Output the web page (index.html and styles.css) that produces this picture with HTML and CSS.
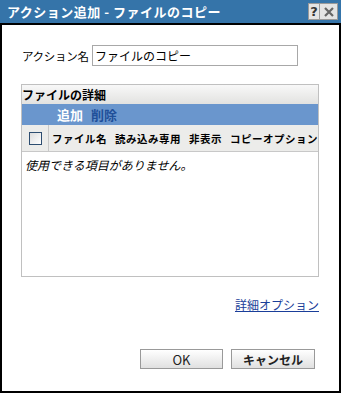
FILE: index.html
```html
<!DOCTYPE html>
<html lang="ja">
<head>
<meta charset="utf-8">
<link rel="stylesheet" href="styles.css">
</head>
<body>
<div class="dialog">
  <div class="titlebar">
    <span class="title">アクション追加 - ファイルのコピー</span>
    <div class="tbtns">
      <span class="tbtn">?</span>
      <span class="tbtn x">
        <svg width="12" height="12" viewBox="0 0 12 12"><path d="M2 2L10 10M10 2L2 10" stroke="#666" stroke-width="2.2"/></svg>
      </span>
    </div>
  </div>
  <div class="content">
    <div class="namerow">
      <label class="lbl">アクション名</label>
      <div class="input">ファイルのコピー</div>
    </div>
    <div class="panel">
      <div class="phead">ファイルの詳細</div>
      <div class="toolbar"><span class="add">追加</span><span class="del">削除</span></div>
      <div class="thead">
        <div class="chkcell"><span class="chk"></span></div>
        <div class="cols">
          <span>ファイル名</span>
          <span>読み込み専用</span>
          <span>非表示</span>
          <span>コピーオプション</span>
        </div>
      </div>
      <div class="empty">使用できる項目がありません。</div>
    </div>
    <div class="linkrow"><a class="link">詳細オプション</a></div>
    <div class="btnrow">
      <button class="btn">OK</button>
      <button class="btn">キャンセル</button>
    </div>
  </div>
</div>
</body>
</html>
```
FILE: styles.css
```css
html, body { margin: 0; padding: 0; background: #fff; }
body { font-family: "Noto Sans CJK JP", "DejaVu Sans", sans-serif; font-size: 12px; color: #000; }
.dialog {
  width: 341px; height: 393px; box-sizing: border-box;
  border: 2px solid #000; border-top: none;
  display: flex; flex-direction: column;
}
.titlebar {
  height: 23px; background: #3574a9; border-bottom: 2px solid #000;
  margin: 0 -2px; padding: 0 3px 0 7px;
  display: flex; align-items: center; justify-content: space-between;
}
.title { color: #fff; font-weight: bold; font-size: 13px; letter-spacing: 0.5px; }
.tbtns { display: flex; gap: 0; }
.tbtn {
  width: 10px; height: 15px; background: #e4e4e4; border: 1px solid #9a9a9a;
  display: flex; align-items: center; justify-content: center;
  font-family: "DejaVu Sans", sans-serif; font-weight: bold; font-size: 13px; color: #333;
  box-sizing: content-box;
}
.tbtn.x { width: 17px; border-left: none; }
.content { flex: 1; padding: 20px 20px 0 19px; display: flex; flex-direction: column; }
.namerow { display: flex; align-items: center; height: 21px; padding-left: 1px; }
.lbl { font-size: 11.5px; width: 70px; flex-shrink: 0; white-space: nowrap; letter-spacing: -0.3px; }
.input {
  width: 202px; height: 19px; border: 1px solid #a8a8a8; box-sizing: content-box;
  line-height: 19px; padding-left: 2px; font-size: 12px; color: #000;
}
.panel {
  margin-top: 18px; height: 191px; border: 1px solid #c0c0c0;
  display: flex; flex-direction: column;
}
.phead {
  height: 19px; line-height: 19px; font-weight: bold; font-size: 12px;
  background: linear-gradient(#f8f8f8, #e2e2e0);
}
.toolbar {
  height: 21px; background: #6a96cd; display: flex; align-items: center;
  padding-left: 35px; gap: 8px; font-weight: bold; font-size: 13px;
}
.add { color: #fff; }
.del { color: #1f4f99; }
.thead {
  height: 26px; background: #ececea; border-bottom: 1px solid #c8c8c8; display: flex;
}
.chkcell { width: 26px; flex-shrink: 0; border-right: 1px solid #c8c8c8; display: flex; align-items: center; justify-content: center; }
.chk {
  width: 11px; height: 11px; border: 1px solid #2d4d70;
  background: linear-gradient(135deg, #dcdcdc, #fff);
}
.cols { display: flex; align-items: center; gap: 8px; padding-left: 3px; font-weight: bold; font-size: 10.5px; letter-spacing: 0.5px; white-space: nowrap; }
.empty { padding: 4px 3px; font-style: italic; font-size: 12px; }
.linkrow { display: flex; justify-content: flex-end; margin-top: 19px; }
.link { color: #1a3e99; text-decoration: underline; font-size: 12px; }
.btnrow { display: flex; justify-content: flex-end; gap: 8px; margin-top: 36px; padding-right: 4px; }
.btn {
  height: 20px; border: 1px solid #999; background: linear-gradient(#ffffff, #e0e0e0);
  font-family: "Noto Sans CJK JP", "DejaVu Sans", sans-serif; font-weight: bold; font-size: 12px;
  color: #222; padding: 0; margin: 0; box-sizing: border-box;
}
.btn:first-child { width: 83px; font-weight: normal; font-size: 13px; }
.btn:last-child { width: 84px; }
```
